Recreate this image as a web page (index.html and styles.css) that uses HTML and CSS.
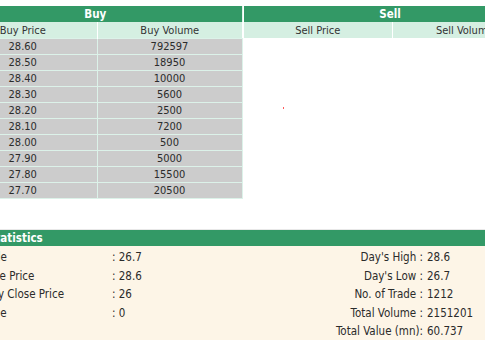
FILE: index.html
```html
<!DOCTYPE html>
<html>
<head>
<meta charset="utf-8">
<link rel="stylesheet" href="styles.css">
</head>
<body>
<div class="page">
  <div class="book">
    <table class="side buy">
      <colgroup><col class="bc1"><col class="bc2"></colgroup>
      <tr><th class="title" colspan="2">Buy</th></tr>
      <tr class="cols"><td class="c1">Buy Price</td><td class="c2">Buy Volume</td></tr>
      <tr class="row"><td>28.60</td><td>792597</td></tr>
      <tr class="row"><td>28.50</td><td>18950</td></tr>
      <tr class="row"><td>28.40</td><td>10000</td></tr>
      <tr class="row"><td>28.30</td><td>5600</td></tr>
      <tr class="row"><td>28.20</td><td>2500</td></tr>
      <tr class="row"><td>28.10</td><td>7200</td></tr>
      <tr class="row"><td>28.00</td><td>500</td></tr>
      <tr class="row"><td>27.90</td><td>5000</td></tr>
      <tr class="row"><td>27.80</td><td>15500</td></tr>
      <tr class="row"><td>27.70</td><td>20500</td></tr>
    </table>
    <div class="sell-wrap">
      <table class="side sell">
        <colgroup><col class="sc1"><col class="sc2"></colgroup>
        <tr><th class="title" colspan="2">Sell</th></tr>
        <tr class="cols"><td class="c1">Sell Price</td><td class="c2">Sell Volume</td></tr>
      </table>
      <span class="dot"></span>
    </div>
  </div>

  <div class="stats">
    <div class="stats-head">Trade Statistics</div>
    <div class="stats-body">
      <div class="lab">Last Trade</div><div class="val">: 26.7</div><div class="rlab">Day's High :</div><div class="rval">28.6</div>
      <div class="lab">Day Close Price</div><div class="val">: 28.6</div><div class="rlab">Day's Low :</div><div class="rval">26.7</div>
      <div class="lab">Yesterday Close Price</div><div class="val">: 26</div><div class="rlab">No. of Trade :</div><div class="rval">1212</div>
      <div class="lab">% Change</div><div class="val">: 0</div><div class="rlab">Total Volume :</div><div class="rval">2151201</div>
      <div class="lab"></div><div class="val"></div><div class="rlab">Total Value (mn):</div><div class="rval">60.737</div>
    </div>
  </div>
</div>
</body>
</html>
```

FILE: styles.css
```css
html, body {
  margin: 0;
  padding: 0;
  background: #ffffff;
  overflow: hidden;
}

body {
  font-family: "DejaVu Sans Condensed", "DejaVu Sans", sans-serif;
  font-size: 11px;
  color: #2b2b2b;
}

.page {
  width: 586px;
  margin-left: -51px;
  padding-top: 6px;
}

.book {
  display: flex;
  gap: 1px;
  align-items: flex-start;
}

.side {
  width: 293px;
  border-collapse: collapse;
  table-layout: fixed;
}

.bc1 { width: 148px; }
.bc2 { width: 145px; }
.sc1 { width: 149px; }
.sc2 { width: 144px; }

.side td, .side th {
  padding: 0;
  text-align: center;
  white-space: nowrap;
  overflow: hidden;
}

.title {
  height: 16px;
  background: #339966;
  color: #ffffff;
  font-weight: bold;
  font-size: 11.5px;
}

.buy .title {
  border-right: 1px solid #dff3ea;
}

.cols td {
  height: 16px;
  background: #d5efe2;
  color: #333;
}

.cols .c1 {
  border-right: 1px solid #ffffff;
}

.row td {
  height: 15px;
  background: #cccccc;
  border: 1px solid #dcf2e9;
  border-left: 0;
}

.row td:first-child {
  border-right: 1px solid #dcf2e9;
}

.sell-wrap {
  position: relative;
  width: 293px;
}

.dot {
  position: absolute;
  left: 39px;
  top: 101px;
  width: 1px;
  height: 2px;
  background: #ff5a5a;
}

.stats {
  margin-top: 30px;
  font-size: 11.5px;
}

.stats-head {
  height: 16px;
  line-height: 16px;
  background: #339966;
  color: #ffffff;
  font-weight: bold;
  padding-left: 3px;
  border-top: 1px solid #e8e8e8;
  white-space: nowrap;
}

.stats-body {
  background: #fdf5e7;
  display: grid;
  grid-template-columns: 162px 130px 182px 112px;
  grid-auto-rows: 18.5px;
  align-items: center;
  padding-top: 2px;
  height: 94px;
  box-sizing: border-box;
}

.lab {
  padding-left: 5px;
  white-space: nowrap;
}

.val {
  padding-left: 1px;
}

.rlab {
  text-align: right;
  white-space: nowrap;
}

.rval {
  padding-left: 4px;
}
```
